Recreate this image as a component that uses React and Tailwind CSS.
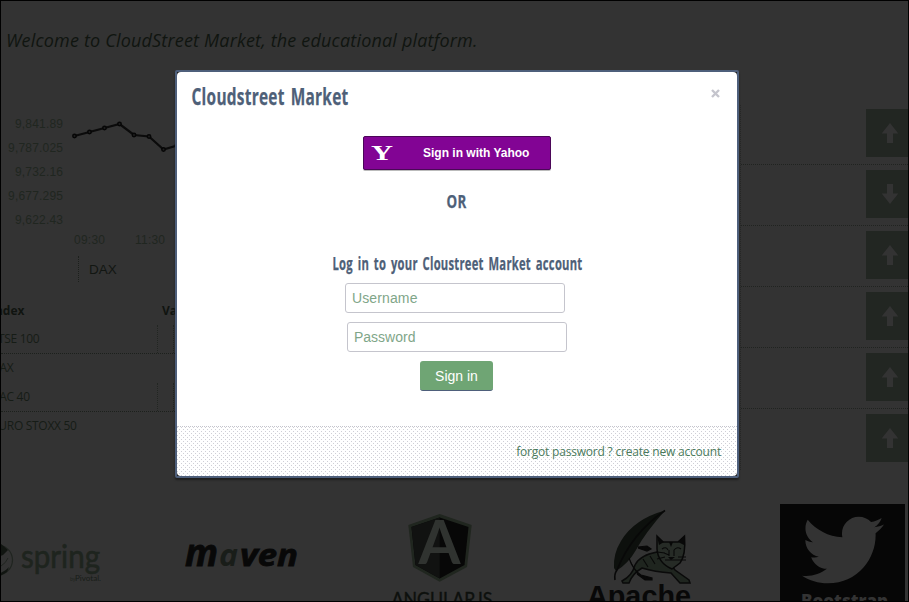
import React from "react";
import { FaTwitter } from "react-icons/fa";

const POINTS = [[73.5, 31], [88.5, 27], [103.5, 23], [118.5, 19], [133, 30], [148, 31.5], [162.5, 44.5], [176, 40.5]];
const LEVELS = [["9,841.89", 48], ["9,787.025", 55], ["9,732.16", 48], ["9,677.295", 55], ["9,622.43", 48]];

function Chart() {
  return (
    <svg width="174" height="145" className="block font-['Liberation_Sans',sans-serif] text-[12px]" fill="#202620">
      {LEVELS.map(([v, w], i) => (
        <text key={v} x={62 - w} y={23 + i * 24} textLength={w}>{v}</text>
      ))}
      <text x="73" y="139" textLength="31">09:30</text>
      <text x="134" y="139" textLength="30">11:30</text>
      <polyline points={POINTS.map((p) => p.join(",")).join(" ")} fill="none" stroke="#0b0b0b" strokeWidth="2.2" />
      {POINTS.map(([x, y]) => (
        <circle key={x} cx={x} cy={y} r="1.7" fill="#202020" stroke="#060606" strokeWidth="1.5" />
      ))}
    </svg>
  );
}

function IndexTable() {
  const rows = [["FTSE 100", true], ["DAX", false], ["CAC 40", true], ["EURO STOXX 50", false]];
  return (
    <div className="text-[12px] text-[#161c16]">
      <div className="flex h-[29px] items-center font-bold text-[#101410]">
        <span className="-ml-[10px] w-[171px] shrink-0">Index</span>
        <span>Value</span>
      </div>
      {rows.map(([name, line], i) => (
        <div key={name} className={"flex h-[29px] items-center tracking-[-0.3px] whitespace-nowrap " + (line ? "border-b border-dotted border-[#1c201c]" : "pb-[2px]")}>
          <span className={["-ml-[9px]", "-ml-[10px]", "-ml-[9px]", "-ml-[9px]"][i]}>{name}</span>
          <span className={"mr-[1px] ml-auto h-full w-[17px] " + (line ? "border-x border-dotted border-[#222622]" : "")} />
        </div>
      ))}
    </div>
  );
}

function Arrow({ down }) {
  return (
    <div className="flex h-[48px] w-[42px] shrink-0 items-center justify-center bg-[#222622] pl-[6px]">
      <svg width="18" height="20" viewBox="0 0 18 20" className={"shrink-0 " + (down ? "rotate-180" : "")}>
        <path d="M9 0 L17.3 10.5 H12 V20 H6 V10.5 H0.7 Z" fill="#333" />
      </svg>
    </div>
  );
}

function Logos() {
  return (
    <div className="flex h-[97px]">
      <svg width="171" height="97" className="shrink-0 font-[Lato,sans-serif]">
        <circle cx="-3.5" cy="56" r="15" fill="none" stroke="#202520" strokeWidth="1.2" />
        <path d="M0 40 L7 46 L2 51 L-1 52 Z M-1 69 Q5 67 8 63 L6 68 L-1 72 Z" fill="#111511" />
        <path d="M0 62 Q5 59 7 54" fill="none" stroke="#202520" />
        <text x="20" y="64" fontSize="32" fill="#1e241e" stroke="#1e241e" strokeWidth="0.6" textLength="79" lengthAdjust="spacingAndGlyphs">spring</text>
        <text x="69" y="77" fontSize="5" fill="#1e241e">by</text>
        <text x="74" y="77" fontSize="8" fill="#181d18" textLength="26" lengthAdjust="spacingAndGlyphs">Pivotal.</text>
      </svg>
      <svg width="200" height="97" className="shrink-0 font-['Open_Sans',sans-serif] font-bold italic" fill="#080808">
        <text x="13" y="62" fontSize="38" stroke="#080808" strokeWidth="0.8" textLength="33" lengthAdjust="spacingAndGlyphs">m</text>
        <text x="47" y="62" fontSize="31" fill="#191d19" textLength="19" lengthAdjust="spacingAndGlyphs">a</text>
        <text x="68" y="62" fontSize="31" stroke="#080808" strokeWidth="0.8" textLength="58" lengthAdjust="spacingAndGlyphs">ven</text>
      </svg>
      <svg width="200" height="97" className="shrink-0 font-[Lato,sans-serif]">
        <g transform="translate(-372 -504)">
          <path d="M439.7 514 L471.7 525 L467 567 L439.7 581.7 L413 567 L408.3 525 Z" fill="#20261f" />
          <path d="M439.7 517.5 L468.5 527 L464.5 565 L439.7 578.5 L415.5 565 L411.5 527 Z" fill="#070707" />
          <path d="M439.7 517.5 L411.5 527 L415.5 565 L439.7 578.5 Z" fill="#111211" />
          <text x="418.5" y="564" fontSize="62" fontWeight="700" fill="#303330" textLength="42" lengthAdjust="spacingAndGlyphs">A</text>
          <text x="391.5" y="606" fontSize="20" fill="#0d100d" stroke="#0d100d" strokeWidth="0.4" textLength="101" lengthAdjust="spacingAndGlyphs">ANGULARJS</text>
        </g>
      </svg>
      <svg width="208" height="97" className="shrink-0 font-['Liberation_Sans',sans-serif]">
        <g transform="translate(-572 -504)">
          <path d="M665 510.5 Q634 519 621 541 Q613 554 614 568 L616 571 Q628 564 636 550 Q645 533 665 510.5 Z" fill="#0d100d" />
          <path d="M665 510.5 Q632 533 617 570 Q614 574 615 580" fill="none" stroke="#080808" strokeWidth="1.6" />
          <path d="M657 552 Q640 555 635 565 Q632 576 622 581 L623 583 H629 Q632 574 642 568 Q655 572 671 573 L680 583 H690 L689 580 L675 570 Q668 560 657 552 Z" fill="#1f251f" stroke="#0a0a0a" strokeWidth="1.5" />
          <path d="M629 558 Q633 570 641 575 L652 578 V580 H645 L637 574 M638 547 L647 546 L651 549 L647 551 L638 548" fill="#080808" stroke="#080808" strokeWidth="1.2" />
          <path d="M657 536 L663 542 H678 L684.5 536 Q686 555 680 563 L672 569 Q658 563 657 549 Z" fill="#262b26" stroke="#080808" strokeWidth="1.5" />
          <path d="M657 536 L664 542 L659 545 Z M684.5 536 L678 542 L684 545 Z M669 542 H673 L671 547 Z M668 557 H675 L671 560 Z" fill="#080808" />
          <path d="M662 549 Q666 546 668 550 M674 550 Q677 546 681 549 M669 550 V556 M674 550 V556 M665 560 L671 560 L678 560 M665 553 L657 552 M665 557 L657 559 M678 557 L686 557 M678 560 L686 560 M650 556 L655 564 M643 559 L648 567 M664 553 L669 555" fill="none" stroke="#080808" strokeWidth="1.1" />
          <text x="587" y="606" fontSize="29" fontWeight="700" fill="#080808" textLength="104" lengthAdjust="spacingAndGlyphs">Apache</text>
        </g>
      </svg>
      <div className="flex h-[97px] w-[125px] shrink-0 flex-col items-center overflow-hidden bg-[#060606]">
        <FaTwitter className="mt-[5px] h-[82px] w-[82px] shrink-0 text-[#333]" />
        <span className="-mt-[2px] pl-[4px] font-['Open_Sans',sans-serif] text-[17px] leading-[24px] font-extrabold text-[#333]">Bootstrap</span>
      </div>
    </div>
  );
}

function HeadingText({ width, height, size, baseline, children }) {
  return (
    <svg width={width} height={height} className="block overflow-visible font-['Open_Sans',sans-serif]" fill="#4e6078">
      <text x="-0.5" y={baseline} fontSize={size} fontWeight="700" letterSpacing="0.4" wordSpacing="2.5" stroke="#4e6078" strokeWidth="0.25" textLength={width + 1} lengthAdjust="spacingAndGlyphs">{children}</text>
    </svg>
  );
}

function LoginModal() {
  return (
    <div role="dialog" className="absolute top-[69px] left-[174px] h-[408px] w-[564px] rounded-[2px] border-2 border-[#4e5f7b] bg-[#222] shadow-[0_2px_2px_#1f1f1f]">
      <div className="flex h-full flex-col overflow-hidden rounded-[4px] bg-white">
        <header className="flex h-[64px] items-start justify-between pt-[13px] pr-[17px] pl-[15px]">
          <h3><HeadingText width={156} height={26} size={23} baseline={20}>Cloudstreet Market</HeadingText></h3>
          <button aria-label="Close" className="mt-[4px]">
            <svg width="9" height="9" viewBox="0 0 9 9" className="block"><path d="M1 1 L8 8 M8 1 L1 8" stroke="#c5c5cd" strokeWidth="2.4" /></svg>
          </button>
        </header>
        <div className="flex h-[290px] flex-col items-center">
          <button className="flex h-[34px] w-[188px] items-center rounded-[2px] border border-[#4b0758] bg-[#820494] pl-[7px] font-['Liberation_Sans',sans-serif] text-[12px] font-bold text-white shadow-[0_1px_0_#bbb]">
            <svg width="22" height="14" className="block font-['Liberation_Serif',serif]" fill="#fff">
              <text x="0" y="13.5" fontSize="20" fontWeight="700" textLength="22" lengthAdjust="spacingAndGlyphs">Y</text>
            </svg>
            <span className="ml-[30px] whitespace-nowrap">Sign in with Yahoo</span>
          </button>
          <h4 className="mt-[21px] mr-[1px]"><HeadingText width={19} height={24} size={18.5} baseline={17}>OR</HeadingText></h4>
          <h4 className="mt-[39px] h-[29px]"><HeadingText width={249} height={24} size={17.5} baseline={16}>Log in to your Cloustreet Market account</HeadingText></h4>
          <form className="flex flex-col items-center font-['Liberation_Sans',sans-serif] text-[14px]">
            <input placeholder="Username" className="mr-[4px] h-[30px] w-[220px] rounded-[3px] border border-[#c5c5cd] px-[6px] tracking-[0.12px] placeholder:text-[#7fa689]" />
            <input placeholder="Password" className="mt-[9px] h-[30px] w-[220px] rounded-[3px] border border-[#c5c5cd] px-[6px] placeholder:text-[#7fa689]" />
            <button type="button" className="mt-[9px] mr-[1px] h-[30px] w-[73px] rounded-[3px] border-b border-[#4e5f7b] bg-[#6fa574] pt-[2px] text-white">Sign in</button>
          </form>
        </div>
        <footer className="flex flex-1 items-center justify-end border-t border-dotted border-[#c5c5cd] bg-[radial-gradient(circle_at_0.5px_0.5px,#cfcfd6_0.6px,transparent_0.7px),radial-gradient(circle_at_2.5px_2.5px,#cfcfd6_0.6px,transparent_0.7px)] bg-[size:4px_4px] pr-[16px] text-[12px] tracking-[-0.2px] text-[#4a7a5c]">
          <a className="whitespace-nowrap">forgot password ? create new account</a>
        </footer>
      </div>
    </div>
  );
}

export default function App() {
  return (
    <div className="relative h-[602px] w-[909px] overflow-hidden border border-black bg-[#333] font-['Open_Sans',sans-serif]">
      <p className="h-[104px] pt-[26px] pl-[5px] text-[18px] leading-[27px] tracking-[0.18px] whitespace-nowrap text-[#101510] italic">
        Welcome to CloudStreet Market, the educational platform.
      </p>
      <div className="flex h-[399px] items-start justify-between">
        <section className="w-[174px] overflow-hidden">
          <Chart />
          <div className="mt-[6px] mb-[14px] ml-[77px] flex h-[26px] items-center border-l border-dotted border-[#1c201c] pt-[3px] pl-[10px] font-['Liberation_Sans',sans-serif] text-[13.5px] text-[#121612]">DAX</div>
          <IndexTable />
        </section>
        <section className="w-[168px] border-l border-dotted border-[#272927]">
          {[false, true, false, false, false, false].map((down, i) => (
            <div key={i} className={"flex items-start justify-end " + (i < 5 ? "border-b border-dotted border-[#202320] " : "") + (i === 0 ? "h-[60px] pt-[4px]" : "h-[61px] pt-[5px]")}>
              <Arrow down={down} />
            </div>
          ))}
        </section>
      </div>
      <Logos />
      <LoginModal />
    </div>
  );
}
